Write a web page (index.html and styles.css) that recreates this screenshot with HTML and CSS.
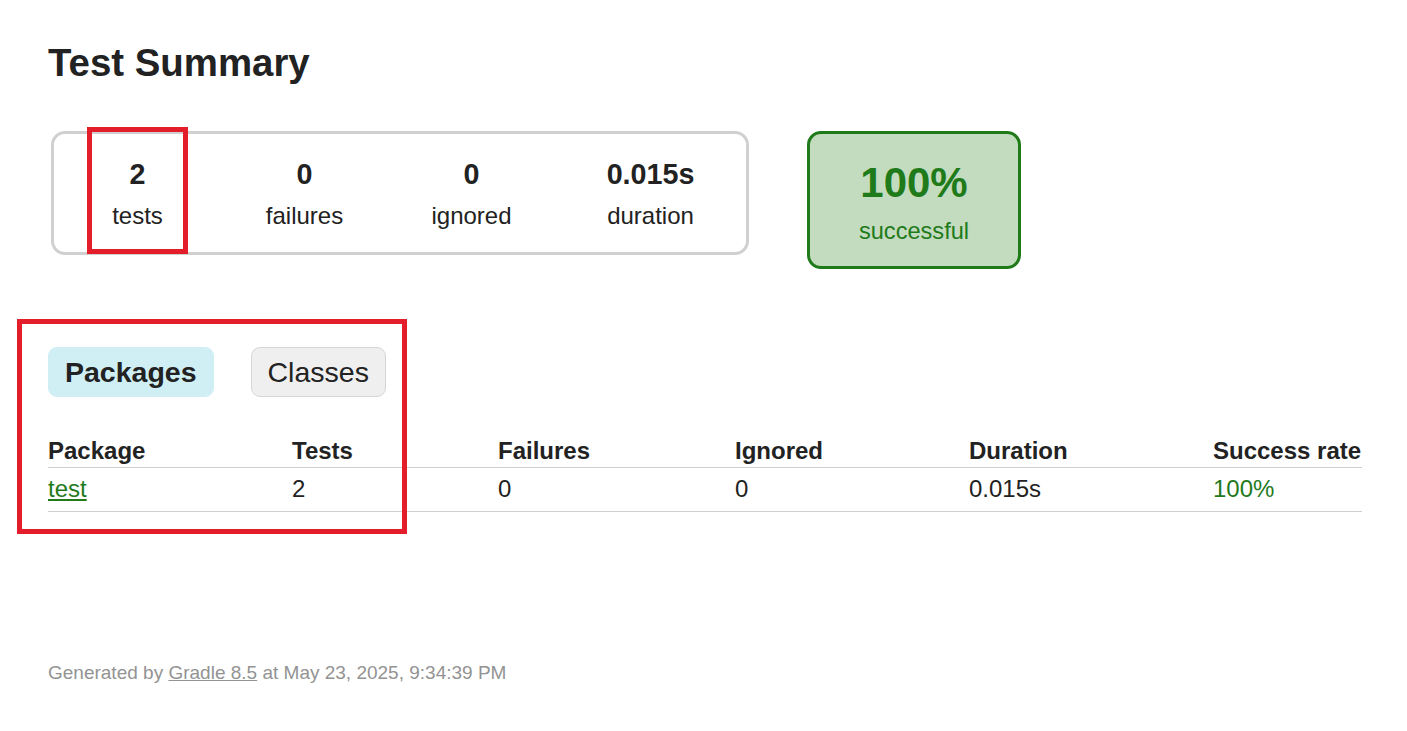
FILE: index.html
```html
<!DOCTYPE html>
<html>
<head>
<meta charset="utf-8">
<title>Test results - Test Summary</title>
<link rel="stylesheet" href="styles.css">
</head>
<body>
<div class="content">
  <h1 class="title">Test Summary</h1>
  <div class="summary">
    <div class="summary-group">
      <div class="info-box">
        <div class="counter">2</div>
        <p class="label">tests</p>
      </div>
      <div class="info-box">
        <div class="counter">0</div>
        <p class="label">failures</p>
      </div>
      <div class="info-box">
        <div class="counter">0</div>
        <p class="label">ignored</p>
      </div>
      <div class="info-box duration">
        <div class="counter">0.015s</div>
        <p class="label">duration</p>
      </div>
    </div>
    <div class="success-rate">
      <div class="percent">100%</div>
      <p class="label">successful</p>
    </div>
  </div>

  <div class="tabs">
    <span class="tab selected">Packages</span>
    <span class="tab">Classes</span>
  </div>

  <table class="results">
    <thead>
      <tr>
        <th class="col-package">Package</th>
        <th class="col-tests">Tests</th>
        <th class="col-failures">Failures</th>
        <th class="col-ignored">Ignored</th>
        <th class="col-duration">Duration</th>
        <th class="col-rate">Success rate</th>
      </tr>
    </thead>
    <tbody>
      <tr>
        <td><a class="link-success" href="#">test</a></td>
        <td>2</td>
        <td>0</td>
        <td>0</td>
        <td>0.015s</td>
        <td class="success">100%</td>
      </tr>
    </tbody>
  </table>

  <p class="footer">Generated by <a class="footer-link" href="#">Gradle 8.5</a> at May 23, 2025, 9:34:39 PM</p>
</div>

<div class="highlight highlight-tests"></div>
<div class="highlight highlight-tabs"></div>
</body>
</html>
```

FILE: styles.css
```css
html, body {
  margin: 0;
  padding: 0;
  background: #ffffff;
}

body {
  font-family: "Liberation Sans", Arial, sans-serif;
  font-size: 24px;
  color: #222222;
  position: relative;
  min-height: 731px;
}

.content {
  padding: 41px 48px 0 48px;
}

.title {
  margin: 0;
  font-size: 38.4px;
  line-height: 43px;
  font-weight: bold;
  color: #222222;
}

.summary {
  display: flex;
  align-items: flex-start;
  margin-top: 47px;
  padding-left: 3px;
}

.summary-group {
  display: flex;
  border: 3px solid #d0d0d0;
  border-radius: 14px;
}

.info-box {
  width: 167px;
  padding: 24px 0 23px;
  text-align: center;
}

.info-box.duration {
  width: 191px;
}

.counter {
  font-size: 28.7px;
  line-height: 32px;
  font-weight: bold;
  margin-bottom: 13px;
}

.label {
  margin: 0;
  font-size: 24px;
  line-height: 26px;
}

.success-rate {
  margin-left: 58px;
  width: 208px;
  padding: 26px 0 22px;
  text-align: center;
  background: #c3dcbf;
  border: 3px solid #1f7a1a;
  border-radius: 14px;
  color: #1f7a1a;
}

.percent {
  font-size: 42px;
  line-height: 46px;
  font-weight: bold;
  margin-bottom: 12px;
}

.success-rate .label {
  font-size: 23.6px;
}

.tabs {
  display: flex;
  gap: 37px;
  margin-top: 78px;
}

.tab {
  display: block;
  padding: 8px 16px;
  font-size: 28.5px;
  line-height: 32px;
  border: 1px solid #d6d6d6;
  border-radius: 9px;
  background: #efefef;
  color: #222222;
}

.tab.selected {
  font-weight: bold;
  background: #cfeff5;
  border-color: #cfeff5;
}

.results {
  border-collapse: collapse;
  margin-top: 41px;
  width: 1314px;
}

.results th,
.results td {
  text-align: left;
  font-size: 24px;
  line-height: 26px;
  padding: 0;
  border-bottom: 1px solid #d0d0d0;
}

.results th {
  font-weight: bold;
  padding-bottom: 3px;
}

.results td {
  padding-top: 8px;
  padding-bottom: 9px;
}

.col-package { width: 244px; }
.col-tests { width: 206px; }
.col-failures { width: 237px; }
.col-ignored { width: 234px; }
.col-duration { width: 244px; }
.col-rate { width: 149px; }

.link-success {
  color: #237a1c;
  text-decoration: underline;
}

.success {
  color: #237a1c;
}

.footer {
  margin: 150px 0 0;
  font-size: 19px;
  line-height: 21px;
  color: #939393;
}

.footer-link {
  color: #939393;
  text-decoration: underline;
}

.highlight {
  position: absolute;
  border: 5px solid #e31e2a;
  box-sizing: border-box;
  pointer-events: none;
}

.highlight-tests {
  left: 87px;
  top: 127px;
  width: 101px;
  height: 127px;
}

.highlight-tabs {
  left: 17px;
  top: 319px;
  width: 390px;
  height: 215px;
}
```
